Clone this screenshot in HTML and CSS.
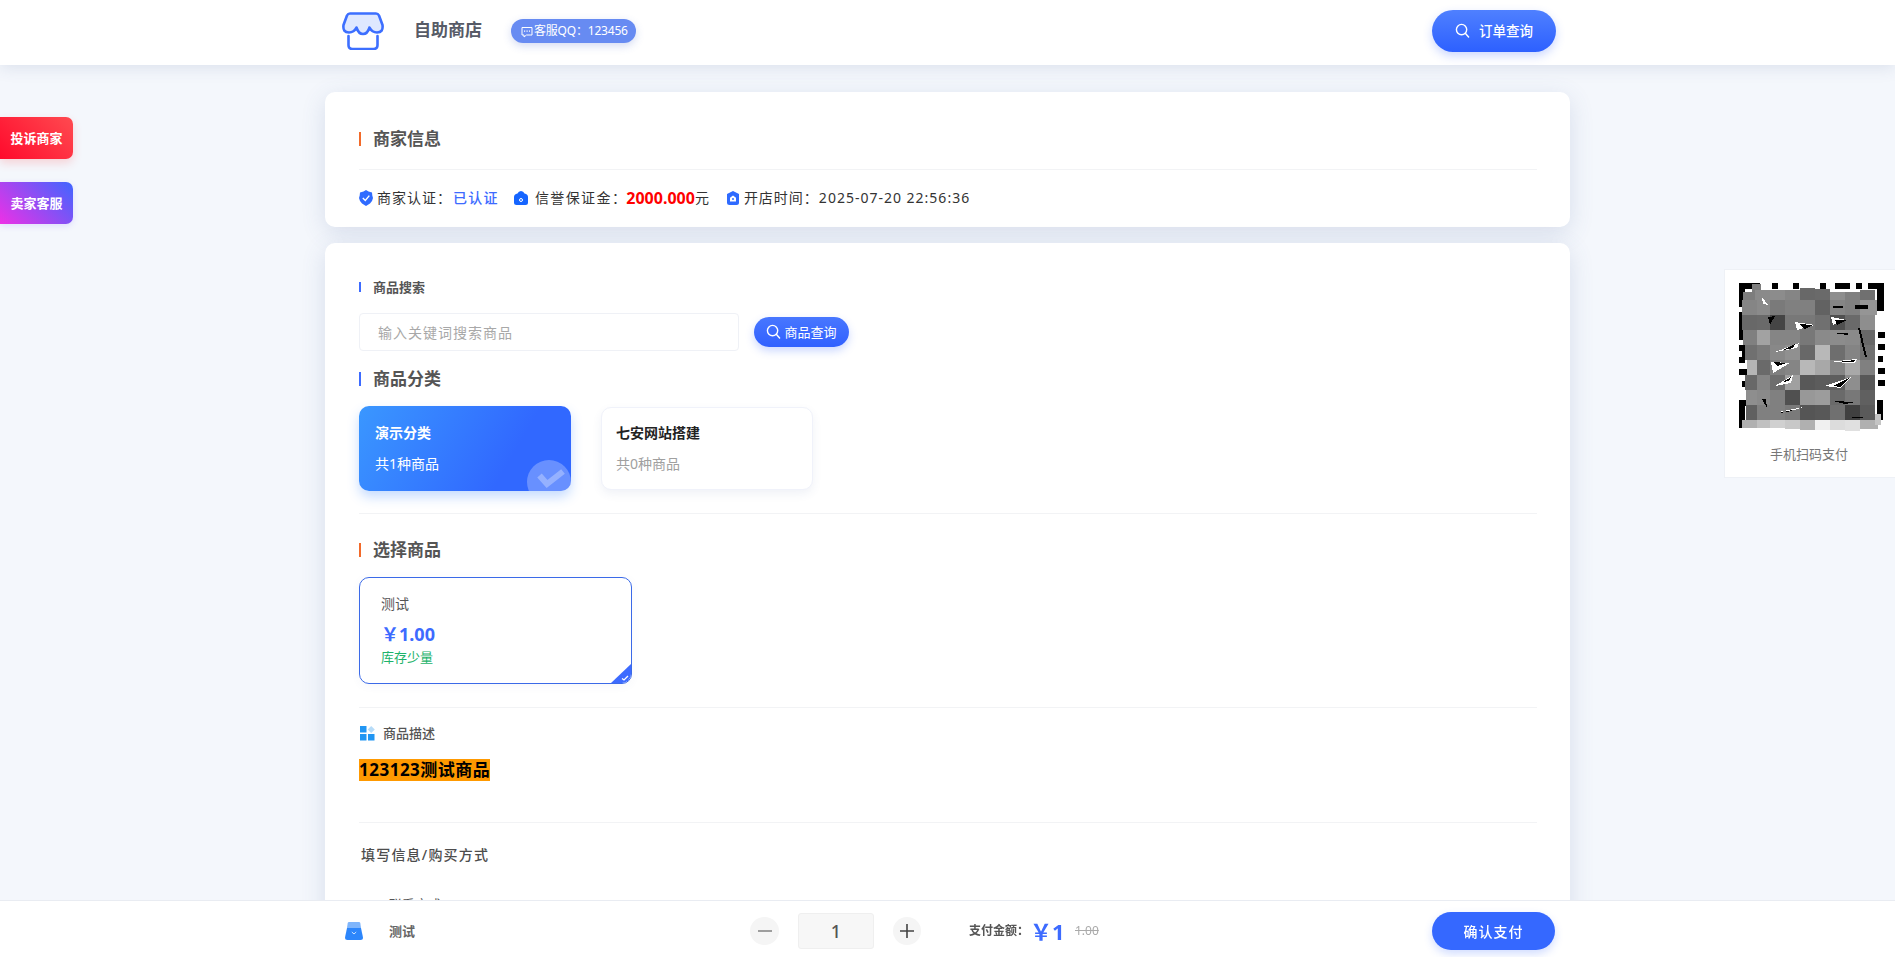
FILE: index.html
```html
<!DOCTYPE html>
<html lang="zh-CN">
<head>
<meta charset="utf-8">
<title>自助商店</title>
<link rel="stylesheet" href="styles.css">
</head>
<body>
<header class="top">
  <div class="top-inner">
    <svg class="logo" viewBox="0 0 42 38" fill="none" stroke="#3d6fff" stroke-width="2.6" stroke-linejoin="round" stroke-linecap="round">
      <path fill="#dfe8ff" d="M8 1.5H34Q36 1.5 37 3.5L40.5 13Q41.5 20.5 35 20.5Q30 20.5 27.5 15.5Q25.5 22 21 22Q16.5 22 14.5 15.5Q12 20.5 7 20.5Q.5 20.5 1.500 13L5 3.500Q6 1.500 8 1.500Z"/>
      <path d="M6.500 24V33Q6.500 37 10.500 37H31.500Q35.500 37 35.500 33V24"/>
    </svg>
    <div class="brand">自助商店</div>
    <div class="qq">
      <svg class="qq-icon" viewBox="0 0 12 12" fill="none" stroke="#fff" stroke-width="1"><path d="M1 1.500H11V9H5.500L3 11V9H1Z"/><path stroke-width="1.200" stroke-dasharray="1.200 1.300" d="M3 5.200H9"/></svg>
      <span>客服QQ：123456</span>
    </div>
    <button class="order-btn">
      <svg class="search" viewBox="0 0 16 16" fill="none" stroke="#fff" stroke-width="1.500" stroke-linecap="round"><circle cx="7" cy="7" r="5.500"/><path d="M11 11L14.500 15"/></svg>
      <span>订单查询</span>
    </button>
  </div>
</header>

<a class="float float-red">投诉商家</a>
<a class="float float-purple">卖家客服</a>

<aside class="qr">
  <svg class="qr-img" viewBox="0 0 152 152" shape-rendering="crispEdges">
    <rect width="152" height="152" fill="#fff"/>
    <g fill="#000">
      <rect x="2" y="1" width="21" height="6"/><rect x="2" y="1" width="6" height="24"/>
      <rect x="35" y="1" width="6" height="6"/><rect x="56" y="1" width="6" height="6"/><rect x="83" y="1" width="6" height="6"/><rect x="98" y="1" width="15" height="6"/><rect x="119" y="1" width="6" height="6"/><rect x="131" y="1" width="16" height="6"/><rect x="140" y="1" width="7" height="28"/>
      <rect x="2" y="63" width="6" height="6"/><rect x="5" y="69" width="5" height="6"/><rect x="2" y="75" width="6" height="6"/><rect x="2" y="87" width="8" height="6"/><rect x="5" y="99" width="5" height="6"/>
      <rect x="141" y="50" width="7" height="6"/><rect x="141" y="62" width="7" height="6"/><rect x="141" y="74" width="5" height="6"/><rect x="141" y="86" width="7" height="6"/><rect x="141" y="98" width="7" height="6"/>
      <rect x="2" y="118" width="6" height="28"/><rect x="2" y="118" width="18" height="6"/><rect x="140" y="118" width="6" height="20"/>
      <rect x="2" y="30" width="6" height="28"/>
    </g>
    <g>
      <rect x="15" y="2" width="9" height="16" fill="#7d7d7d"/><rect x="18" y="8" width="15" height="10" fill="#8a8a8a"/><rect x="33" y="8" width="15" height="10" fill="#8c8c8c"/><rect x="48" y="8" width="15" height="10" fill="#858585"/><rect x="63" y="6" width="15" height="12" fill="#686868"/><rect x="78" y="7" width="15" height="11" fill="#6a6a6a"/><rect x="93" y="10" width="15" height="8" fill="#8e8e8e"/><rect x="108" y="10" width="15" height="8" fill="#808080"/><rect x="123" y="8" width="15" height="10" fill="#707070"/><rect x="6" y="10" width="12" height="8" fill="#7d7d7d"/>
      <rect x="5" y="18" width="15" height="15" fill="#858585"/><rect x="20" y="18" width="13" height="15" fill="#8a8a8a"/><rect x="33" y="18" width="15" height="15" fill="#7a7a7a"/><rect x="48" y="18" width="15" height="15" fill="#808080"/><rect x="63" y="18" width="15" height="15" fill="#808080"/><rect x="78" y="18" width="15" height="15" fill="#626262"/><rect x="93" y="18" width="15" height="15" fill="#858585"/><rect x="108" y="18" width="15" height="15" fill="#808080"/><rect x="123" y="18" width="17" height="15" fill="#959595"/>
      <rect x="5" y="33" width="15" height="15" fill="#686868"/><rect x="20" y="33" width="13" height="15" fill="#6a6a6a"/><rect x="33" y="33" width="15" height="15" fill="#454545"/><rect x="48" y="33" width="15" height="15" fill="#787878"/><rect x="63" y="33" width="15" height="15" fill="#787878"/><rect x="78" y="33" width="15" height="15" fill="#707070"/><rect x="93" y="33" width="15" height="15" fill="#505050"/><rect x="108" y="33" width="15" height="15" fill="#6a6a6a"/><rect x="123" y="33" width="15" height="15" fill="#8e8e8e"/>
      <rect x="6" y="48" width="14" height="15" fill="#808080"/><rect x="20" y="48" width="13" height="15" fill="#a2a2a2"/><rect x="33" y="48" width="15" height="15" fill="#858585"/><rect x="48" y="48" width="15" height="15" fill="#858585"/><rect x="63" y="48" width="15" height="15" fill="#787878"/><rect x="78" y="48" width="15" height="15" fill="#8a8a8a"/><rect x="93" y="48" width="15" height="15" fill="#8c8c8c"/><rect x="108" y="48" width="15" height="15" fill="#8a8a8a"/><rect x="123" y="48" width="15" height="15" fill="#686868"/>
      <rect x="8" y="63" width="12" height="15" fill="#707070"/><rect x="20" y="63" width="13" height="15" fill="#7a7a7a"/><rect x="33" y="63" width="15" height="15" fill="#888888"/><rect x="48" y="63" width="15" height="15" fill="#909090"/><rect x="63" y="63" width="15" height="15" fill="#686868"/><rect x="78" y="63" width="15" height="15" fill="#b8b8b8"/><rect x="93" y="63" width="15" height="15" fill="#6e6e6e"/><rect x="108" y="63" width="15" height="15" fill="#848484"/><rect x="123" y="63" width="15" height="15" fill="#707070"/>
      <rect x="10" y="78" width="10" height="15" fill="#b5b5b5"/><rect x="20" y="78" width="13" height="15" fill="#6a6a6a"/><rect x="33" y="78" width="15" height="15" fill="#808080"/><rect x="48" y="78" width="15" height="15" fill="#858585"/><rect x="63" y="78" width="15" height="15" fill="#b8b8b8"/><rect x="78" y="78" width="15" height="15" fill="#a8a8a8"/><rect x="93" y="78" width="15" height="15" fill="#858585"/><rect x="108" y="78" width="15" height="15" fill="#a8a8a8"/><rect x="123" y="78" width="15" height="15" fill="#808080"/>
      <rect x="8" y="93" width="12" height="15" fill="#686868"/><rect x="20" y="93" width="13" height="15" fill="#858585"/><rect x="33" y="93" width="15" height="15" fill="#6e6e6e"/><rect x="48" y="93" width="15" height="15" fill="#a0a0a0"/><rect x="63" y="93" width="15" height="15" fill="#585858"/><rect x="78" y="93" width="15" height="15" fill="#5c5c5c"/><rect x="93" y="93" width="15" height="15" fill="#5e5e5e"/><rect x="108" y="93" width="15" height="15" fill="#8e8e8e"/><rect x="123" y="93" width="15" height="15" fill="#585858"/>
      <rect x="9" y="108" width="11" height="15" fill="#8e8e8e"/><rect x="20" y="108" width="13" height="15" fill="#8a8a8a"/><rect x="33" y="108" width="15" height="15" fill="#808080"/><rect x="48" y="108" width="15" height="15" fill="#505050"/><rect x="63" y="108" width="15" height="15" fill="#989898"/><rect x="78" y="108" width="15" height="15" fill="#9c9c9c"/><rect x="93" y="108" width="15" height="15" fill="#6a6a6a"/><rect x="108" y="108" width="15" height="15" fill="#787878"/><rect x="123" y="108" width="15" height="15" fill="#606060"/>
      <rect x="9" y="123" width="11" height="15" fill="#606060"/><rect x="20" y="123" width="13" height="15" fill="#808080"/><rect x="33" y="123" width="15" height="15" fill="#808080"/><rect x="48" y="123" width="15" height="15" fill="#7a7a7a"/><rect x="63" y="123" width="15" height="15" fill="#555555"/><rect x="78" y="123" width="15" height="15" fill="#585858"/><rect x="93" y="123" width="15" height="15" fill="#707070"/><rect x="108" y="123" width="15" height="15" fill="#404040"/><rect x="123" y="123" width="15" height="15" fill="#5a5a5a"/>
      <rect x="5" y="138" width="15" height="8" fill="#b0b0b0"/><rect x="20" y="138" width="13" height="8" fill="#c0c0c0"/><rect x="33" y="138" width="15" height="8" fill="#d0d0d0"/><rect x="48" y="138" width="15" height="9" fill="#c8c8c8"/><rect x="63" y="138" width="15" height="10" fill="#b0b0b0"/><rect x="78" y="138" width="15" height="10" fill="#f0f0f0"/><rect x="93" y="138" width="15" height="10" fill="#dcdcdc"/><rect x="108" y="138" width="15" height="11" fill="#e0e0e0"/><rect x="123" y="138" width="18" height="9" fill="#b0b0b0"/><rect x="138" y="132" width="6" height="11" fill="#c4c4c4"/>
    </g>
    <g fill="#fff">
      <polygon points="58,40 78,43 60,48"/><polygon points="34,80 53,81 36,91"/><polygon points="38,70 62,61 60,66"/><polygon points="38,104 56,93 54,101"/><polygon points="88,104 114,95 104,106"/><polygon points="92,80 120,77 118,81"/><polygon points="42,130 66,125 58,128"/><polygon points="94,35 110,38 96,43"/><polygon points="25,15 31,23 26,22"/>
    </g>
    <g fill="#000">
      <polygon points="62,42 76,43 68,47"/><polygon points="31,35 38,34 33,43"/><polygon points="98,38 110,38 100,43"/><polygon points="46,68 58,62 56,66"/><polygon points="36,80 50,81 40,84"/><polygon points="46,100 54,95 52,99"/><polygon points="96,104 112,96 104,105"/><polygon points="100,80 118,78 116,80"/><polygon points="96,119 118,120 108,122"/><rect x="96" y="24" width="10" height="2"/><rect x="118" y="23" width="13" height="4"/><polygon points="121,46 123,46 130,75 128,75"/><polygon points="25,117 29,117 30,126"/><polygon points="96,51 111,51 111,53"/><polygon points="42,131 60,127 50,130"/><rect x="115" y="135" width="11" height="1"/>
    </g>
  </svg>
  <div class="qr-text">手机扫码支付</div>
</aside>

<main class="page">
  <section class="card card-merchant">
    <div class="head">
      <h2 class="title title-orange">商家信息</h2>
    </div>
    <div class="info">
      <svg class="info-ico ico-shield" viewBox="0 0 14 16"><path fill="#2f6bff" d="M7 0L9.500 1.500L13 2.500L13.300 5.500L14 8L13 11L11 13.500L7 16L3 13.500L1 11L0 8L.7 5.500L1 2.500L4.500 1.500Z"/><path fill="none" stroke="#fff" stroke-width="1.400" d="M3.800 8L6.300 10.400L10.300 5.600"/></svg>
      <span class="info-label">商家认证：</span><span class="info-blue">已认证</span>
      <svg class="info-ico ico-gap" viewBox="0 0 14 14"><path fill="#1565ff" d="M3.500 2.500Q4.500 0 7 0T10.500 2.500Q14 3 14 6V11.500Q14 14 11.500 14H2.500Q0 14 0 11.500V6Q0 3 3.500 2.500Z"/><circle cx="7" cy="9" r="1.500" fill="none" stroke="#fff" stroke-width="1"/></svg>
      <span class="info-label label-wide">信誉保证金：</span><span class="info-red">2000.000</span><span class="info-label">元</span>
      <svg class="info-ico ico-gap2" viewBox="0 0 14 14"><path fill="#2f6bff" d="M7 0L13 3V11.500Q13 14 10.500 14H3.500Q1 14 1 11.500V3Z"/><path fill="#fff" d="M7 4.500L10 6.800V10.500H4V6.800Z"/><circle cx="7" cy="8" r="1" fill="#2f6bff"/></svg>
      <span class="info-label">开店时间：2025-07-20 22:56:36</span>
    </div>
  </section>

  <section class="card card-main">
    <h3 class="small-title">商品搜索</h3>
    <div class="search-row">
      <input class="search-input" type="text" placeholder="输入关键词搜索商品">
      <button class="search-btn">
        <svg class="search-sm" viewBox="0 0 16 16" fill="none" stroke="#fff" stroke-width="1.500" stroke-linecap="round"><circle cx="7" cy="7" r="5.500"/><path d="M11 11L14.500 15"/></svg>
        <span>商品查询</span>
      </button>
    </div>

    <h2 class="title title-blue t-cat">商品分类</h2>
    <div class="cats">
      <div class="cat cat-on">
        <div class="cat-name">演示分类</div>
        <div class="cat-sub">共1种商品</div>
        <svg class="cat-check" viewBox="0 0 44 31"><circle cx="22" cy="22" r="22" fill="#fff" fill-opacity=".27"/><path d="M12.500 15.500L20 24L36 11.500" fill="none" stroke="#fff" stroke-opacity=".3" stroke-width="6"/></svg>
      </div>
      <div class="cat cat-off">
        <div class="cat-name">七安网站搭建</div>
        <div class="cat-sub">共0种商品</div>
      </div>
    </div>

    <div class="rule rule-a"></div>
    <h2 class="title title-orange t-sel">选择商品</h2>
    <div class="product">
      <div class="p-name">测试</div>
      <div class="p-price">￥1.00</div>
      <div class="p-stock">库存少量</div>
      <span class="p-corner"></span>
      <svg class="p-tick" viewBox="0 0 8 6"><path d="M1 3.500L3 5L7 1" fill="none" stroke="#fff" stroke-width="1.300"/></svg>
    </div>

    <div class="rule rule-b"></div>
    <div class="desc-head">
      <svg class="desc-ico" viewBox="0 0 15 15"><rect x="0" y="0" width="6.500" height="6.500" fill="#2196f3"/><rect x="0" y="8" width="6.500" height="6.500" fill="#2196f3"/><rect x="8" y="8" width="6.500" height="6.500" fill="#2196f3"/><path d="M11.200 0L14.800 3.500L11.200 7L7.700 3.500Z" fill="#b7dcf8"/></svg>
      <span>商品描述</span>
    </div>
    <div class="desc-body"><span class="mark">123123测试商品</span></div>

    <div class="rule rule-c"></div>
    <div class="fill-title">填写信息/购买方式</div>
    <div class="field-label">联系方式</div>
  </section>
</main>

<footer class="bar">
  <div class="bar-inner">
    <div class="bar-left">
      <svg class="bag" viewBox="0 0 18 18"><path d="M4 0H14Q15 0 15.300 1L16 6H2L2.700 1Q3 0 4 0Z" fill="#7fb5fb"/><path d="M2 6H16L18 15.500Q18 18 15.500 18H2.500Q0 18 0 15.500Z" fill="#2d86fb"/><path d="M6.800 10L9 12L11.200 10" fill="none" stroke="#cfe4ff" stroke-width="1"/></svg>
      <span class="bar-name">测试</span>
    </div>
    <div class="step">
      <span class="step-btn step-minus"><svg viewBox="0 0 14 14"><path d="M0 7H14" stroke="#888" stroke-width="1.600"/></svg></span>
      <span class="step-val">1</span>
      <span class="step-btn"><svg viewBox="0 0 14 14"><path d="M0 7H14M7 0V14" stroke="#444" stroke-width="1.600"/></svg></span>
    </div>
    <div class="pay">
      <span class="pay-label">支付金额：</span>
      <span class="pay-num">￥1</span>
      <span class="pay-old">1.00</span>
    </div>
    <button class="confirm">确认支付</button>
  </div>
</footer>
</body>
</html>
```

FILE: styles.css
```css
* { box-sizing: border-box; }
html { overflow: hidden; height: 100%; }
body {
  margin: 0;
  height: 100%;
  overflow: hidden;
  background: #f4f7fc;
  color: #333;
  font: 14px/20px "Noto Sans", "Noto Sans CJK SC", sans-serif;
}
h2, h3 { margin: 0; }
button { border: 0; padding: 0; font-family: inherit; color: #fff; }

/* header */
.top { position: relative; height: 65px; background: #fff; box-shadow: 0 2px 16px rgba(60, 80, 130, .14); }
.top-inner { width: 1245px; height: 65px; margin: 0 auto; padding: 0 14px 0 17px; display: flex; align-items: center; }
.logo { width: 42px; height: 38px; margin: 0 30px 3px 0; flex: none; }
.brand { width: 68px; margin: 0 29px 6px 0; font-size: 17px; font-weight: 700; line-height: 24px; color: #565a66; white-space: nowrap; }
.qq { width: 125px; height: 24px; margin-bottom: 3px; padding-left: 10px; display: flex; align-items: center; gap: 1px; border-radius: 12px; background: #678bf2; box-shadow: 0 3px 8px rgba(60, 90, 200, .22); color: #fff; font-size: 12px; letter-spacing: -.2px; white-space: nowrap; }
.qq-icon { width: 12px; height: 12px; flex: none; margin-top: 1px; }
.order-btn { width: 124px; height: 42px; margin: 0 0 3px auto; padding-bottom: 2px; display: flex; align-items: center; justify-content: center; gap: 9px; border-radius: 21px; background: linear-gradient(180deg, #4f80ff, #2d60ff); box-shadow: 0 4px 10px rgba(50, 100, 255, .25); font-size: 13.5px; font-weight: 500; }
.search { width: 15px; height: 15px; }

/* floats */
.float { position: absolute; left: 0; width: 73px; height: 42px; display: flex; align-items: center; justify-content: center; border-radius: 0 7px 7px 0; color: #fff; font-size: 13px; font-weight: 700; }
.float-red { top: 117px; background: linear-gradient(45deg, #ff0a2c, #ff4a50); box-shadow: 0 4px 10px rgba(255, 60, 60, .2); }
.float-purple { top: 182px; background: linear-gradient(45deg, #ee30e6, #3f66ff); box-shadow: 0 2px 6px rgba(100, 80, 255, .15); }

/* qr */
.qr { position: absolute; top: 269px; right: 0; width: 171px; height: 209px; background: #fff; border: 1px solid #eef1f6; border-right: 0; }
.qr-img { position: absolute; left: 12px; top: 12px; width: 152px; height: 152px; display: block; }
.qr-text { position: absolute; left: 45px; top: 174px; font-size: 13px; color: #777; white-space: nowrap; }

/* page */
.page { width: 1245px; margin: 27px auto 0; }
.card { background: #fff; border-radius: 10px; padding: 0 33px 0 34px; box-shadow: 0 6px 24px rgba(70, 95, 150, .16); }
.card-merchant { height: 135px; }
.card-main { margin-top: 16px; height: 900px; padding-top: 34px; }
.head { height: 78px; padding-top: 34px; border-bottom: 1px solid #f2f3f5; }
.title { height: 26px; padding-left: 14px; position: relative; font-size: 17px; font-weight: 700; line-height: 26px; color: #555; }
.title::before { content: ""; position: absolute; left: 0; top: 6px; width: 2px; height: 14px; }
.title-orange::before { background: #f26a2a; }
.title-blue::before { background: #3d6bff; }

.info { height: 56px; display: flex; align-items: center; color: #333; }
.info-ico { width: 14px; height: 14px; flex: none; }
.ico-shield { width: 14px; height: 16px; }
.ico-gap { margin: 0 7px 0 15px; }
.ico-gap2 { margin: 0 4px 0 16px; }
.info-label { margin-left: 4px; letter-spacing: 1px; white-space: nowrap; }
.ico-gap + .info-label, .ico-gap2 + .info-label { margin-left: 0; }
.label-wide { letter-spacing: 1.4px; }
.info-blue { margin-left: 1px; color: #3d6bff; font-weight: 500; letter-spacing: 1.3px; white-space: nowrap; }
.info-red { margin-left: -1px; color: #f00; font-weight: 700; font-size: 16px; white-space: nowrap; }
.info-red + .info-label { margin-left: 0; }

.small-title { position: relative; height: 20px; padding-left: 14px; font-size: 13px; font-weight: 700; line-height: 20px; color: #555; }
.small-title::before { content: ""; position: absolute; left: 0; top: 5px; width: 2px; height: 10px; background: #3d6bff; }

.search-row { margin-top: 16px; display: flex; align-items: center; gap: 15px; }
.search-input { width: 380px; height: 38px; padding: 0 18px; border: 1px solid #eff1f6; border-radius: 4px; outline: 0; background: #fff; font: 14px "Noto Sans", "Noto Sans CJK SC", sans-serif; letter-spacing: 1px; }
.search-input::placeholder { color: #a8a8a8; opacity: 1; }
.search-btn { width: 95px; height: 30px; padding-bottom: 2px; display: flex; align-items: center; justify-content: center; gap: 3px; border-radius: 15px; background: linear-gradient(180deg, #4877ff, #3060ff); box-shadow: 0 4px 8px rgba(50, 100, 255, .25); font-size: 13px; }
.search-sm { width: 15px; height: 15px; }

.t-cat { margin-top: 15px; }
.cats { margin-top: 14px; display: flex; gap: 30px; align-items: center; }
.cat { position: relative; width: 212px; border-radius: 10px; overflow: hidden; }
.cat-on { height: 85px; padding: 17px 16px 0; background: linear-gradient(120deg, #3a97ff, #3168ff 70%); color: #fff; box-shadow: 0 6px 12px rgba(50, 130, 255, .28); overflow: visible; }
.cat-off { height: 83px; padding: 15px 14px 0; background: #fff; border: 1px solid #f0f2fa; box-shadow: 0 4px 10px rgba(70, 95, 150, .08); }
.cat-name { height: 20px; font-size: 14px; font-weight: 700; line-height: 20px; }
.cat-off .cat-name { color: #222; }
.cat-sub { margin-top: 11px; height: 20px; font-size: 14px; line-height: 20px; }
.cat-off .cat-sub { color: #a0a0a0; }
.cat-check { position: absolute; right: 0; bottom: 0; width: 44px; height: 31px; border-radius: 0 0 10px 0; }

.rule { height: 1px; background: #f2f3f5; }
.rule-a { margin-top: 22px; }
.t-sel { margin-top: 23px; }
.product { position: relative; margin-top: 14px; width: 273px; height: 107px; padding: 15px 0 0 21px; border: 1px solid #3b6ae8; border-radius: 10px; overflow: hidden; box-shadow: 0 2px 10px rgba(70, 95, 150, .05); }
.p-name { height: 22px; line-height: 22px; color: #555; font-size: 14px; }
.p-price { margin: 6px 0 0 0; height: 26px; line-height: 26px; font-size: 18px; font-weight: 700; color: #3d6bff; }
.p-stock { height: 20px; line-height: 20px; font-size: 13px; color: #1db36b; }
.p-corner { position: absolute; right: 0; bottom: 0; width: 0; height: 0; border-style: solid; border-width: 0 0 19px 20px; border-color: transparent transparent #3d6bff transparent; }
.p-tick { position: absolute; right: 2px; bottom: 2px; width: 8px; height: 6px; }

.rule-b { margin-top: 23px; }
.desc-head { margin-top: 15px; height: 20px; display: flex; align-items: center; gap: 8px; font-size: 13px; color: #555; font-weight: 500; }
.desc-ico { width: 15px; height: 15px; margin-left: 1px; flex: none; }
.desc-body { margin-top: 16px; height: 22px; }
.mark { display: inline-block; height: 22px; background: #ff9900; color: #000; font-size: 17px; font-weight: 700; line-height: 22px; letter-spacing: .5px; white-space: nowrap; }
.rule-c { margin-top: 41px; }
.fill-title { margin: 22px 0 0 2px; height: 20px; font-size: 14px; font-weight: 500; letter-spacing: 1.2px; color: #4d4d4d; }
.field-label { margin: 29px 0 0 30px; height: 20px; font-size: 13px; color: #555; }

/* bottom bar */
.bar { position: fixed; left: 0; right: 0; bottom: 0; height: 57px; background: #fff; border-top: 1px solid #e9ecf2; }
.bar-inner { width: 1245px; height: 56px; margin: 0 auto; padding-top: 4px; display: flex; align-items: center; }
.bar-left { width: 425px; padding: 0 0 0 20px; display: flex; align-items: center; flex: none; }
.bag { width: 18px; height: 18px; flex: none; }
.bar-name { margin-left: 26px; font-size: 13px; font-weight: 700; color: #666; }
.step { display: flex; align-items: center; gap: 19px; flex: none; }
.step-btn { width: 28px; height: 28px; display: flex; align-items: center; justify-content: center; border-radius: 50%; background: #f5f5f5; }
.step-minus { width: 29px; }
.step-btn svg { width: 14px; height: 14px; }
.step-val { width: 76px; height: 36px; display: flex; align-items: center; justify-content: center; border: 1px solid #efefef; border-radius: 3px; background: #f7f7f7; font-size: 18px; font-weight: 500; color: #555; }
.pay { margin-left: 48px; display: flex; align-items: center; flex: none; }
.pay-label { width: 60px; font-size: 12px; font-weight: 700; color: #555; white-space: nowrap; }
.pay-num { width: 45px; margin-left: 1px; font-size: 22px; font-weight: 700; line-height: 30px; color: #3d6bff; white-space: nowrap; }
.pay-old { font-size: 12px; color: #aaa; text-decoration: line-through; }
.confirm { width: 123px; height: 38px; margin-left: auto; margin-right: 15px; border-radius: 19px; background: #3568ff; box-shadow: 0 4px 8px rgba(50, 100, 255, .22); font-size: 14px; font-weight: 500; letter-spacing: 1px; }
```
